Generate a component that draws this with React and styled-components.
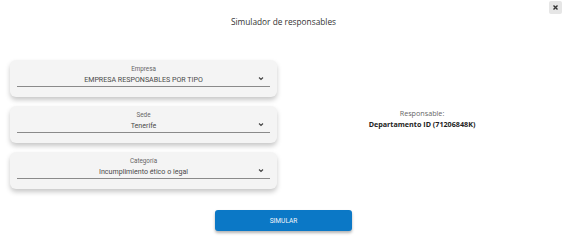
import styled, { createGlobalStyle } from "styled-components";

const GlobalStyle = createGlobalStyle`
  html, body {
    margin: 0;
    padding: 0;
    background: #fff;
    font-family: "Open Sans", "Noto Sans", sans-serif;
  }
`;

const Modal = styled.div`
  width: 567px;
  height: 241px;
  display: flex;
  flex-direction: column;
  position: relative;
  box-sizing: border-box;
  padding-top: 16px;
`;

const CloseButton = styled.button`
  position: absolute;
  top: 1px;
  right: 5px;
  width: 13px;
  height: 13px;
  border: 0;
  border-radius: 2px;
  background: #e6e6e6;
  padding: 0;
  display: flex;
  align-items: center;
  justify-content: center;
  cursor: pointer;
`;

const Title = styled.h2`
  margin: 0;
  text-align: center;
  font-size: 8.3px;
  font-weight: 400;
  color: #333;
  line-height: 12px;
`;

const Body = styled.div`
  display: flex;
  margin-top: 32px;
  padding-left: 10px;
`;

const Fields = styled.div`
  width: 267px;
  display: flex;
  flex-direction: column;
  gap: 9px;
`;

const Card = styled.div`
  height: 37px;
  background: #f4f4f4;
  border-radius: 6px;
  box-shadow: 0 3px 5px rgba(0, 0, 0, 0.22);
  box-sizing: border-box;
  padding: 5px 7px 0;
`;

const Label = styled.div`
  text-align: center;
  font-family: Roboto, sans-serif;
  font-size: 6.3px;
  line-height: 8px;
  color: #666;
`;

const SelectRow = styled.div`
  display: flex;
  align-items: center;
  border-bottom: 1px solid #8a8a8a;
  height: 13px;
  position: relative;
`;

const Value = styled.div`
  flex: 1;
  text-align: center;
  font-family: Roboto, sans-serif;
  font-size: 7.1px;
  font-weight: 400;
  color: #4a4a4a;
  line-height: 12px;
`;

const Chevron = styled.svg`
  position: absolute;
  right: 6px;
  top: 3px;
`;

const Result = styled.div`
  flex: 1;
  display: flex;
  flex-direction: column;
  align-items: center;
  justify-content: center;
  padding-bottom: 12px;
  gap: 1px;
`;

const ResultLabel = styled.div`
  font-size: 7.2px;
  color: #666;
  line-height: 10px;
`;

const ResultValue = styled.div`
  font-size: 7.2px;
  font-weight: 700;
  color: #222;
  line-height: 10px;
`;

const Footer = styled.div`
  display: flex;
  justify-content: center;
  margin-top: 21px;
`;

const SimulateButton = styled.button`
  width: 137px;
  height: 21px;
  border: 0;
  border-radius: 3px;
  background: #0b78c6;
  color: #f2f6fa;
  font-family: Roboto, sans-serif;
  font-size: 6.6px;
  font-weight: 400;
  box-shadow: 0 2px 3px rgba(0, 0, 0, 0.3);
  cursor: pointer;
`;

const fields = [
  { label: "Empresa", value: "EMPRESA RESPONSABLES POR TIPO" },
  { label: "Sede", value: "Tenerife" },
  { label: "Categoría", value: "Incumplimiento ético o legal" },
];

function SelectCard({ label, value }) {
  return (
    <Card>
      <Label>{label}</Label>
      <SelectRow>
        <Value>{value}</Value>
        <Chevron width="6" height="5" viewBox="0 0 6 5">
          <path d="M1 1.5 L3 3.5 L5 1.5" fill="none" stroke="#444" strokeWidth="1.1" />
        </Chevron>
      </SelectRow>
    </Card>
  );
}

export default function App() {
  return (
    <>
      <GlobalStyle />
      <Modal>
        <CloseButton aria-label="Cerrar">
          <svg width="7" height="7" viewBox="0 0 7 7">
            <path d="M1.5 1.5 L5.5 5.5 M5.5 1.5 L1.5 5.5" stroke="#333" strokeWidth="1.4" />
          </svg>
        </CloseButton>
        <Title>Simulador de responsables</Title>
        <Body>
          <Fields>
            {fields.map((f) => (
              <SelectCard key={f.label} {...f} />
            ))}
          </Fields>
          <Result>
            <ResultLabel>Responsable:</ResultLabel>
            <ResultValue>Departamento ID (71206848K)</ResultValue>
          </Result>
        </Body>
        <Footer>
          <SimulateButton>SIMULAR</SimulateButton>
        </Footer>
      </Modal>
    </>
  );
}
